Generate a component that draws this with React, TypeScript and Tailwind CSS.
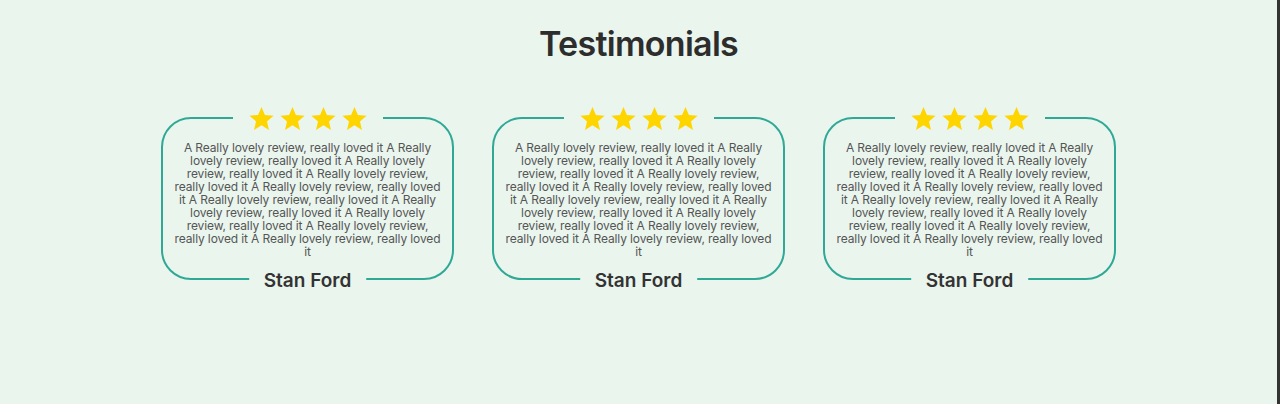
import { MdStar } from "react-icons/md";

const review = Array(10).fill("A Really lovely review, really loved it").join(" ");

const testimonials = [
  { id: 0, name: "Stan Ford", stars: 4, text: review },
  { id: 1, name: "Stan Ford", stars: 4, text: review },
  { id: 2, name: "Stan Ford", stars: 4, text: review },
];

function TestimonialCard({ name, stars, text }: { name: string; stars: number; text: string }) {
  return (
    <div className="relative w-[293px] h-[163px] border-2 border-[#2fa996] rounded-[30px] px-[11px] pt-[22px]">
      <div className="absolute left-1/2 top-0 -translate-x-1/2 -translate-y-1/2 bg-[#eaf5ee] px-[14px] flex gap-[2px]">
        {Array.from({ length: stars }).map((_, i) => (
          <MdStar key={i} size={29} className="text-[#ffd500]" />
        ))}
      </div>
      <p className="text-[12px] leading-[13px] tracking-[-0.12px] text-[#555] text-center">{text}</p>
      <div className="absolute left-1/2 bottom-0 -translate-x-1/2 translate-y-[17px] bg-[#eaf5ee] px-[15px]">
        <span className="text-[19px] font-semibold text-[#333] whitespace-nowrap">{name}</span>
      </div>
    </div>
  );
}

export default function App() {
  return (
    <div className="flex h-[404px] bg-[#eaf5ee] font-['Inter',sans-serif]">
      <div className="flex-1 flex flex-col items-center">
        <h1 className="mt-[22px] text-[34px] leading-[44px] font-semibold text-[#2d2d2d] tracking-[-0.7px]">
          Testimonials
        </h1>
        <div className="mt-[51px] flex gap-[38px]">
          {testimonials.map((t) => (
            <TestimonialCard key={t.id} name={t.name} stars={t.stars} text={t.text} />
          ))}
        </div>
      </div>
      <div className="w-[3px] bg-[#333]" />
    </div>
  );
}
